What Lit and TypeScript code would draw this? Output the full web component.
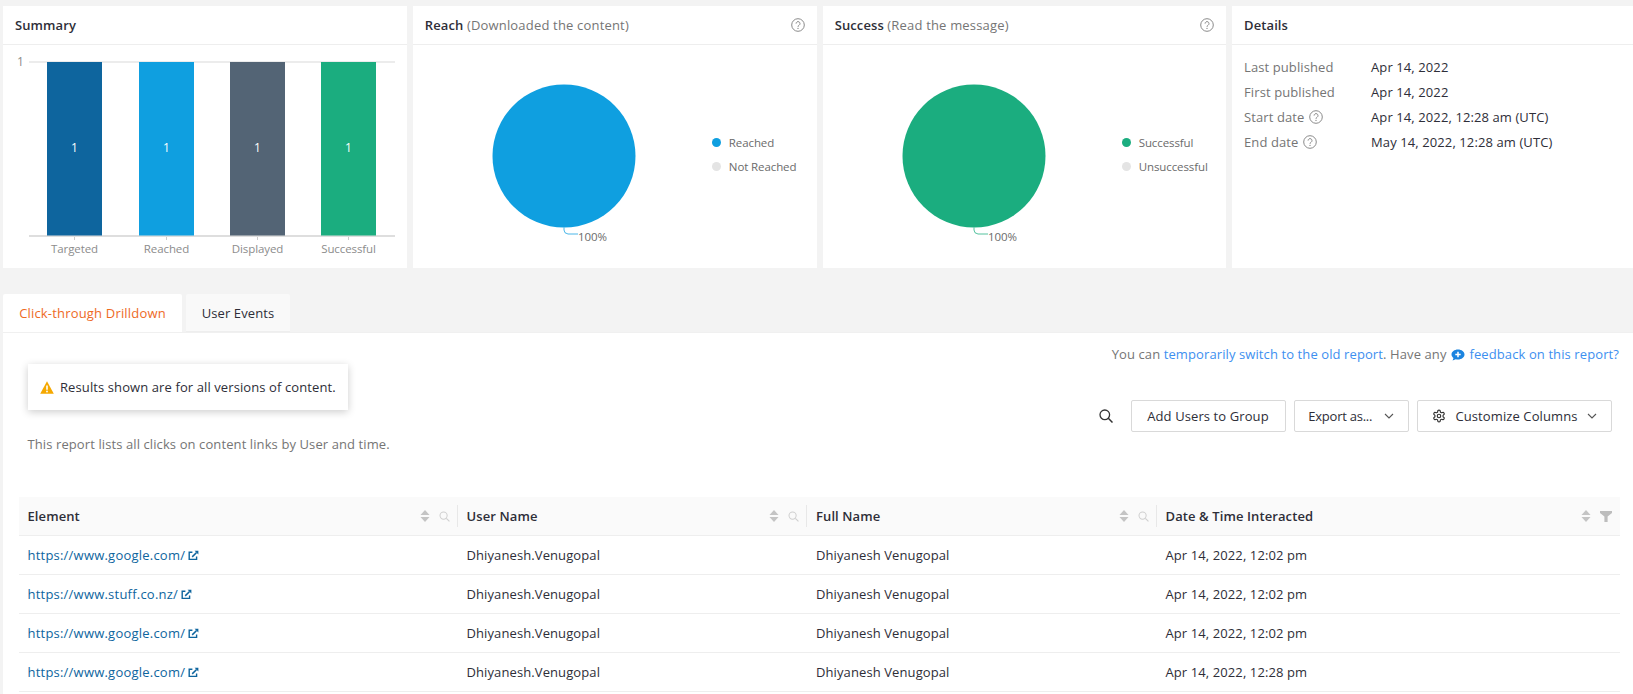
import { LitElement, html, css, svg } from "lit";
import { customElement } from "lit/decorators.js";

const help = html`<svg class="help" viewBox="0 0 14 14" width="14" height="14"><circle cx="7" cy="7" r="6.3" fill="none" stroke="#8a8a8a" stroke-width="1"/><path d="M5.1 5.6a1.95 1.95 0 1 1 3 1.6c-.7.45-1.1.8-1.1 1.6" fill="none" stroke="#8a8a8a" stroke-width="1"/><circle cx="7" cy="10.4" r=".65" fill="#8a8a8a"/></svg>`;
const ext = html`<svg class="ext" viewBox="0 0 11 11" width="11" height="11"><path d="M8.6 6.4v3H1.2V2.2h3.2" fill="none" stroke="#0e659e" stroke-width="1.4"/><path d="M6.6.7h3.8v3.8z" fill="#0e659e"/><path d="M4.2 6.9 8.6 2.5" stroke="#0e659e" stroke-width="1.5"/></svg>`;
const chev = html`<svg class="chev" viewBox="0 0 10 6" width="10" height="6"><path d="M1 1l4 4 4-4" fill="none" stroke="#555" stroke-width="1.1"/></svg>`;
const sort = html`<svg viewBox="0 0 10 13" width="10" height="14"><path d="M5 .5l4.500 5H.5z" fill="#c4c4c4"/><path d="M5 12.500l-4.500-5h9z" fill="#c4c4c4"/></svg>`;
const smallSearch = html`<svg viewBox="0 0 12 12" width="11" height="11"><circle cx="5" cy="5" r="3.900" fill="none" stroke="#cfcfcf" stroke-width="1.100"/><path d="M8 8l3.400 3.400" stroke="#cfcfcf" stroke-width="1.200"/></svg>`;
const filter = html`<svg viewBox="0 0 12 11" width="12" height="11"><path d="M0 0h12v2L7.600 5.600V11H4.400V5.600L0 2z" fill="#bdbdbd"/></svg>`;

@customElement("app-root")
export class AppRoot extends LitElement {
  static styles = css`
    :host { display: block; width: 1633px; height: 694px; overflow: hidden; background: #f3f3f3; font-family: "Open Sans", "Noto Sans", sans-serif; font-size: 13px; color: #2e2e38; letter-spacing: 0.1px; }
    .page { box-sizing: border-box; width: 1633px; height: 694px; padding: 6px 0 0 3px; display: flex; flex-direction: column; }
    .cards { display: grid; grid-template-columns: 404px 404px 403.500px 404px; column-gap: 5.850px; height: 262px; flex: none; }
    .card { background: #fff; display: flex; flex-direction: column; min-width: 0; }
    .head { flex: none; height: 39px; box-sizing: border-box; border-bottom: 1px solid #eee; padding: 0 12px; display: flex; align-items: center; justify-content: space-between; }
    .title { font-weight: 600; color: #2e2e38; }
    .title span { font-weight: 400; color: #757575; letter-spacing: 0.18px; }
    .help { display: block; flex: none; }
    .chart { display: block; }
    .pie-body { flex: 1; position: relative; }
    .pie-body svg { display: block; }
    .legend { position: absolute; left: 299px; top: 88px; display: flex; flex-direction: column; gap: 6px; font-size: 11.5px; color: #6b6b6b; letter-spacing: -0.1px; }
    .legend div { display: flex; align-items: center; gap: 8px; height: 18px; }
    .dot { width: 9px; height: 9px; border-radius: 50%; flex: none; }
    .details { padding: 9px 12px; display: grid; grid-template-columns: 127px 1fr; grid-auto-rows: 25px; align-items: center; }
    .details .k { color: #757575; display: flex; align-items: center; gap: 5px; }
    .details .v { color: #2e2e38; }
    .tabs { display: flex; gap: 4px; margin-top: 26px; flex: none; }
    .tab { height: 38px; box-sizing: border-box; display: flex; align-items: center; justify-content: center; border-radius: 2px 2px 0 0; }
    .tab.on { width: 179px; background: #fff; color: #ee6a1f; letter-spacing: 0.18px; }
    .tab.off { width: 104px; background: #f9f9f9; color: #2e2e38; border-bottom: 1px solid #eee; }
    .panel { flex: 1; background: #fff; padding-top: 12px; border-top: 1px solid #f0f0f0; min-height: 0; }
    .note { text-align: right; padding-right: 14px; height: 18px; line-height: 18px; color: #757575; }
    .note a { color: #3d8ff0; text-decoration: none; }
    .note svg { vertical-align: -2px; margin: 0 1px; }
    .bar { display: flex; justify-content: space-between; margin-top: 1px; padding: 0 21px 0 24.500px; }
    .alert { display: inline-flex; align-items: center; gap: 6px; height: 46px; box-sizing: border-box; width: 320px; padding-left: 12.500px; background: #fff; box-shadow: 0 2px 8px rgba(0,0,0,.2); }
    .desc { color: #757575; margin-top: 25px; line-height: 18px; }
    .tools { display: flex; align-items: center; gap: 8.500px; padding-top: 36px; height: 32px; }
    .mag { margin-right: 9px; display: block; }
    .btn { height: 32px; box-sizing: border-box; border: 1px solid #d9d9d9; border-radius: 2px; display: flex; align-items: center; justify-content: center; gap: 9px; background: #fff; color: #2e2e38; }
    .b1 { width: 155px; } .b3 { width: 195px; }
    .b2 { width: 114.500px; letter-spacing: -0.25px; gap: 12px; }
    .table { margin: 44px 0 0 16px; width: 1601px; display: grid; grid-template-columns: 438.500px 349.500px 349.500px 463.500px; }
    .th { height: 39px; box-sizing: border-box; background: #fafafa; border-bottom: 1px solid #eee; display: flex; align-items: center; font-weight: 600; position: relative; padding-left: 9px; gap: 9px; }
    .th:first-child { padding-left: 8.500px; }
    .th .name { flex: 1; }
    .th .ico { display: flex; align-items: center; gap: 9px; padding-right: 8px; }
    .th .ico svg { display: block; }
    .th.div::after { content: ""; position: absolute; right: 0; top: 8px; bottom: 8px; width: 1px; background: #e8e8e8; }
    .td { height: 39px; box-sizing: border-box; border-bottom: 1px solid #eee; display: flex; align-items: center; padding-left: 9px; gap: 3px; }
    .td.first { padding-left: 8.500px; }
    .td a { color: #0e659e; text-decoration: none; letter-spacing: 0.22px; }
    .ext { flex: none; }
  `;

  private pie(color: string) {
    return html`<svg width="404" height="222" viewBox="0 0 404 222">
      <circle cx="151" cy="111" r="71.500" fill="${color}"/>
      <path d="M151 182.500v2.500q0 3.500 4 4h10" fill="none" stroke="${color}" stroke-width="1" opacity=".75"/>
      <text x="165" y="196" font-size="11.500" letter-spacing="-0.1" fill="#6b6b6b">100%</text>
    </svg>`;
  }

  private bars() {
    const items: [string, string, number, number][] = [
      ["Targeted", "#0e659e", 44, 55],
      ["Reached", "#0f9fe0", 136, 55],
      ["Displayed", "#536475", 227, 55],
      ["Successful", "#1bad7f", 318, 55],
    ];
    return html`<svg class="chart" width="404" height="222" viewBox="0 0 404 222">
      <rect x="26" y="16" width="366" height="2" fill="#ececec"/>
      <rect x="26" y="190" width="366" height="2" fill="#dedede"/>
      <text x="14" y="21" font-size="12" fill="#8c8c8c">1</text>
      ${items.map(([n, c, x, w]) => svg`
        <rect x="${x}" y="17" width="${w}" height="173.500" fill="${c}"/>
        <text x="${x + w / 2}" y="106.500" font-size="12" font-weight="500" fill="#fff" text-anchor="middle">1</text>
        <rect x="${x + w / 2 - .5}" y="192" width="1" height="3" fill="#ccc"/>
        <text x="${x + w / 2}" y="208" font-size="11.500" letter-spacing="-0.1" fill="#8c8c8c" text-anchor="middle">${n}</text>`)}
    </svg>`;
  }

  private link(u: string) { return html`<a href="#">${u}</a>${ext}`; }

  render() {
    const rows = [
      ["https://www.google.com/", "Apr 14, 2022, 12:02 pm"],
      ["https://www.stuff.co.nz/", "Apr 14, 2022, 12:02 pm"],
      ["https://www.google.com/", "Apr 14, 2022, 12:02 pm"],
      ["https://www.google.com/", "Apr 14, 2022, 12:28 pm"],
    ];
    const hd = (n: string, last = false) => html`<div class="th ${last ? "" : "div"}"><span class="name">${n}</span><span class="ico">${sort}${last ? filter : smallSearch}</span></div>`;
    return html`<div class="page">
      <div class="cards">
        <section class="card"><div class="head"><div class="title">Summary</div></div>${this.bars()}</section>
        <section class="card"><div class="head"><div class="title">Reach <span>(Downloaded the content)</span></div>${help}</div>
          <div class="pie-body">${this.pie("#0f9fe0")}
            <div class="legend"><div><i class="dot" style="background:#0f9fe0"></i>Reached</div><div><i class="dot" style="background:#e4e4e4"></i>Not Reached</div></div>
          </div></section>
        <section class="card"><div class="head"><div class="title">Success <span>(Read the message)</span></div>${help}</div>
          <div class="pie-body">${this.pie("#1bad7f")}
            <div class="legend"><div><i class="dot" style="background:#1bad7f"></i>Successful</div><div><i class="dot" style="background:#e4e4e4"></i>Unsuccessful</div></div>
          </div></section>
        <section class="card"><div class="head"><div class="title">Details</div></div>
          <div class="details">
            <div class="k">Last published</div><div class="v">Apr 14, 2022</div>
            <div class="k">First published</div><div class="v">Apr 14, 2022</div>
            <div class="k">Start date ${help}</div><div class="v">Apr 14, 2022, 12:28 am (UTC)</div>
            <div class="k">End date ${help}</div><div class="v">May 14, 2022, 12:28 am (UTC)</div>
          </div></section>
      </div>
      <div class="tabs"><div class="tab on">Click-through Drilldown</div><div class="tab off">User Events</div></div>
      <div class="panel">
        <div class="note">You can <a href="#">temporarily switch to the old report</a>. Have any <a href="#"><svg viewBox="0 0 14 12" width="14" height="12"><path d="M7 .5c3.600 0 6.500 2.200 6.500 5S10.600 10.500 7 10.500c-.8 0-1.500-.1-2.200-.3L1.600 11.500l.9-2.600C1.200 7.900.5 6.800.5 5.500c0-2.800 2.900-5 6.500-5z" fill="#1b84e0"/><path d="M7 2.800v5.400M4.300 5.500h5.400" stroke="#fff" stroke-width="1.500"/></svg> feedback on this report?</a></div>
        <div class="bar">
          <div>
            <div class="alert"><svg viewBox="0 0 14 13" width="14" height="13"><path d="M7 .3 13.800 12.700H.2z" fill="#f5a800"/><path d="M7 4.500v4.200" stroke="#fff" stroke-width="1.600"/><circle cx="7" cy="10.500" r=".9" fill="#fff"/></svg><span>Results shown are for all versions of content.</span></div>
            <div class="desc">This report lists all clicks on content links by User and time.</div>
          </div>
          <div class="tools">
            <svg class="mag" viewBox="0 0 14 14" width="14" height="14"><circle cx="5.800" cy="5.800" r="4.800" fill="none" stroke="#333" stroke-width="1.300"/><path d="M9.300 9.300l4.200 4.200" stroke="#333" stroke-width="1.500"/></svg>
            <div class="btn b1">Add Users to Group</div>
            <div class="btn b2">Export as... ${chev}</div>
            <div class="btn b3"><svg viewBox="0 0 24 24" width="14" height="14"><path d="M12.220 2h-.44a2 2 0 0 0-2 2v.18a2 2 0 0 1-1 1.730l-.43.25a2 2 0 0 1-2 0l-.15-.08a2 2 0 0 0-2.730.73l-.22.38a2 2 0 0 0 .73 2.730l.15.1a2 2 0 0 1 1 1.720v.51a2 2 0 0 1-1 1.740l-.15.09a2 2 0 0 0-.73 2.730l.22.38a2 2 0 0 0 2.730.73l.15-.08a2 2 0 0 1 2 0l.43.25a2 2 0 0 1 1 1.730V20a2 2 0 0 0 2 2h.44a2 2 0 0 0 2-2v-.18a2 2 0 0 1 1-1.730l.43-.25a2 2 0 0 1 2 0l.15.08a2 2 0 0 0 2.730-.73l.22-.39a2 2 0 0 0-.73-2.730l-.15-.08a2 2 0 0 1-1-1.740v-.5a2 2 0 0 1 1-1.740l.15-.09a2 2 0 0 0 .73-2.730l-.22-.38a2 2 0 0 0-2.730-.73l-.15.08a2 2 0 0 1-2 0l-.43-.25a2 2 0 0 1-1-1.730V4a2 2 0 0 0-2-2z" fill="none" stroke="#333" stroke-width="2"/><circle cx="12" cy="12" r="3" fill="none" stroke="#333" stroke-width="2"/></svg>Customize Columns ${chev}</div>
          </div>
        </div>
        <div class="table">
          ${hd("Element")}${hd("User Name")}${hd("Full Name")}${hd("Date & Time Interacted", true)}
          ${rows.map(([u, d]) => html`
            <div class="td first">${this.link(u)}</div>
            <div class="td">Dhiyanesh.Venugopal</div>
            <div class="td">Dhiyanesh Venugopal</div>
            <div class="td">${d}</div>`)}
        </div>
      </div>
    </div>`;
  }
}
